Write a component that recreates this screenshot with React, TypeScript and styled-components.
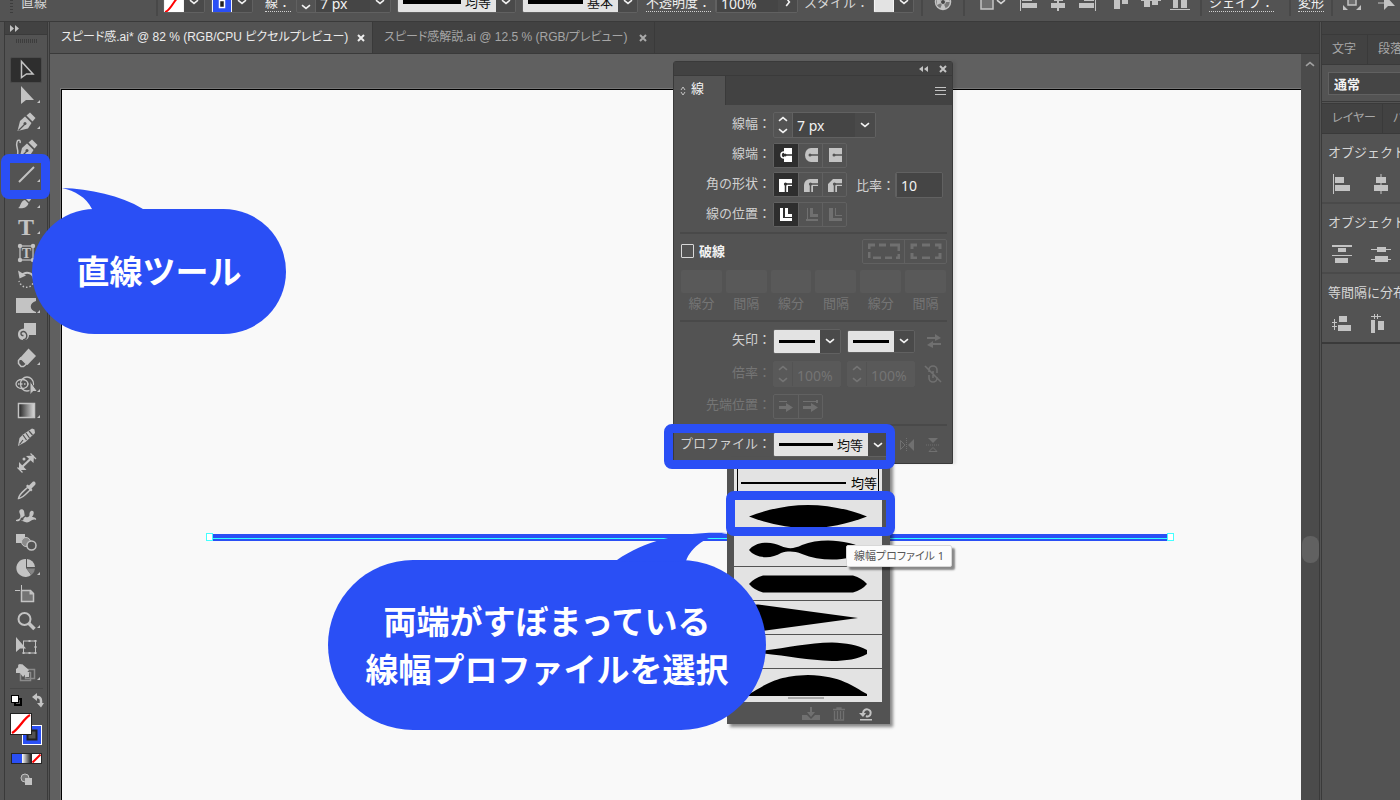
import React from "react";
import styled, { createGlobalStyle, css } from "styled-components";

const c = {
  base: "#535353",
  dark: "#424242",
  field: "#454545",
  line: "#3a3a3a",
  edge: "#616161",
  canvas: "#606060",
  art: "#f9f9f9",
  blue: "#2a4ff5",
  icon: "#c3c3c3",
  off: "#707070",
  paper: "#e3e3e3",
};

const Global = createGlobalStyle`
  *, *::before, *::after { box-sizing: border-box; }
  body { margin: 0; background: ${c.base}; }
  body, button, input, select {
    font-family: "Noto Sans", "Noto Sans CJK JP", sans-serif;
    font-size: 13px;
    line-height: 20px;
    color: #d6d6d6;
  }
  button, input, select { margin: 0; padding: 0; border: 0; border-radius: 0; background: none; }
  svg { display: block; flex: none; }
`;

const App_ = styled.div`
  position: relative;
  display: flex;
  flex-direction: column;
  height: 100vh;
  overflow: hidden;
  background: ${c.base};
`;

/* ---------- control bar ---------- */

const ControlBar = styled.header`
  display: flex;
  flex: none;
  align-items: flex-end;
  height: 22px;
  padding: 0 0 8px 10px;
  overflow: hidden;
  white-space: nowrap;
  border-bottom: 1px solid ${c.line};
`;

const Group = styled.div<{ $gap?: number; $w?: number }>`
  display: flex;
  flex: none;
  align-items: center;
  height: 22px;
  margin-left: ${(p) => p.$gap ?? 0}px;
  ${(p) => p.$w && css`width: ${p.$w}px;`}
`;

const BarLabel = styled.label<{ $dotted?: boolean; $w?: number }>`
  height: 20px;
  ${(p) => p.$w && css`width: ${p.$w}px;`}
  ${(p) => p.$dotted && css`border-bottom: 1px dotted #d0d0d0; color: #f0f0f0;`}
`;

const BarRule = styled.span<{ $gap: number }>`
  flex: none;
  width: 2px;
  height: 22px;
  margin-left: ${(p) => p.$gap}px;
  margin-bottom: -3px;
  background: #484848;
`;

const Grip = styled.span`
  width: 3px;
  height: 22px;
  background: repeating-linear-gradient(#3d3d3d 0 1px, transparent 1px 3px);
`;

const Swatch = styled.button<{ $w?: number }>`
  display: flex;
  align-items: center;
  justify-content: center;
  width: ${(p) => p.$w ?? 21}px;
  height: 22px;
  background: ${c.paper};
  border: 1px solid #f4f4f4;
  overflow: hidden;
`;

/* ---------- shared controls ---------- */

const Text = styled.input<{ $w: number; $off?: boolean }>`
  width: ${(p) => p.$w}px;
  height: 100%;
  min-width: 0;
  padding: 2px 0 0 4px;
  font-size: 14px;
  color: ${(p) => (p.$off ? "#747474" : "#f2f2f2")};
  background: ${(p) => (p.$off ? "transparent" : c.field)};
  border-left: 1px solid ${(p) => (p.$off ? c.base : c.edge)};
`;

const Small = styled.button<{ $w?: number; $off?: boolean }>`
  display: flex;
  flex: none;
  align-items: center;
  justify-content: center;
  width: ${(p) => p.$w ?? 20}px;
  height: 100%;
  color: ${(p) => (p.$off ? "#747474" : "#f2f2f2")};
  background: ${(p) => (p.$off ? "transparent" : "#4a4a4a")};
`;

const Combo = styled.div<{ $h?: number; $off?: boolean }>`
  display: flex;
  flex: none;
  height: ${(p) => p.$h ?? 26}px;
  overflow: hidden;
  border: 1px solid ${(p) => (p.$off ? "#595959" : c.edge)};
  border-radius: 2px;
  background: ${(p) => (p.$off ? "#595959" : "transparent")};
`;

const Preview = styled.button<{ $w: number }>`
  display: flex;
  flex: none;
  align-items: center;
  justify-content: space-between;
  gap: 4px;
  width: ${(p) => p.$w}px;
  height: 100%;
  padding: 0 5px;
  color: #111;
  background: ${c.paper};
`;

const StrokeLine = styled.i<{ $h?: number }>`
  flex: 1;
  height: ${(p) => p.$h ?? 3}px;
  background: #000;
`;

const Chevron = ({ up = false, right = false }: { up?: boolean; right?: boolean }) => (
  <svg width="10" height="6" viewBox="0 0 10 6" fill="none" stroke="currentColor" strokeWidth="1.600"
    transform={up ? "rotate(180)" : right ? "rotate(270)" : undefined}>
    <path d="M1 1.200 5 4.400 9 1.200" />
  </svg>
);

const StepBox = styled.div<{ $off?: boolean }>`
  display: flex;
  flex: none;
  flex-direction: column;
  width: 18px;
  color: ${(p) => (p.$off ? "#747474" : "#f2f2f2")};
  button { display: flex; flex: 1; align-items: center; justify-content: center; color: inherit; }
`;

const Stepper = ({ off }: { off?: boolean }) => (
  <StepBox $off={off}>
    <button aria-label="増やす" disabled={off}><Chevron up /></button>
    <button aria-label="減らす" disabled={off}><Chevron /></button>
  </StepBox>
);

const Ico = ({ w = 20, h = 20, children }: { w?: number; h?: number; children: React.ReactNode }) => (
  <svg width={w} height={h} viewBox={`0 0 ${w} ${h}`} fill={c.icon}>{children}</svg>
);

/* ---------- workspace ---------- */

const Work = styled.div`
  display: flex;
  flex: 1;
  min-height: 0;
`;

const Toolbar = styled.nav`
  display: flex;
  flex: none;
  flex-direction: column;
  align-items: center;
  width: 46px;
  margin-left: 4px;
  border-left: 1px solid ${c.line};
  border-right: 3px double ${c.line};
`;

const ToolHead = styled.div`
  display: flex;
  flex: none;
  align-items: center;
  align-self: stretch;
  height: 13px;
  padding-left: 5px;
  background: ${c.dark};
  border-bottom: 1px solid ${c.line};
`;

const ToolGrip = styled.div`
  flex: none;
  width: 21px;
  height: 4px;
  margin: 4px 0 14px;
  background: repeating-linear-gradient(90deg, #3d3d3d 0 1px, transparent 1px 2px);
`;

const ToolGroup = styled.div`
  display: flex;
  flex: none;
  flex-direction: column;
  margin-bottom: 1px;
`;

const Tool = styled.button<{ $on?: boolean }>`
  display: flex;
  align-items: center;
  justify-content: center;
  width: 32px;
  height: 26px;
  border-radius: 2px;
  ${(p) => p.$on && css`background: #2e2e2e; border: 1px solid #4b4b4b;`}
`;

const ToolRule = styled.hr`
  flex: none;
  width: 33px;
  height: 1px;
  margin: 1px 0 3px;
  border: 0;
  background: #484848;
`;

const PaintArea = styled.div`
  display: flex;
  flex: none;
  flex-direction: column;
  align-items: center;
`;

const Main = styled.main`
  display: flex;
  flex: 1;
  flex-direction: column;
  min-width: 0;
`;

const Tabs = styled.div`
  display: flex;
  flex: none;
  height: 32px;
  background: ${c.dark};
  border-bottom: 1px solid ${c.line};
`;

const Tab = styled.div<{ $on?: boolean }>`
  display: flex;
  align-items: center;
  justify-content: space-between;
  width: ${(p) => (p.$on ? 323 : 282)}px;
  padding: 0 7px 2px 11px;
  white-space: nowrap;
  font-family: "Liberation Sans", "Noto Sans CJK JP", sans-serif;
  font-size: 12px;
  font-feature-settings: "palt";
  color: ${(p) => (p.$on ? "#ececec" : "#a6a6a6")};
  background: ${(p) => (p.$on ? c.base : "transparent")};
  border-right: 1px solid ${c.line};
  button { color: inherit; padding-top: 2px; }
`;

const View = styled.div`
  display: flex;
  flex: 1;
  min-height: 0;
`;

const Canvas = styled.div`
  flex: 1;
  min-width: 0;
  display: flex;
  padding: 35px 0 0 11px;
  background: ${c.canvas};
`;

const Artboard = styled.div`
  flex: 1;
  background: ${c.art};
  border-top: 1px solid #000;
  border-left: 1px solid #000;
  outline: 1px solid #777;
`;

const Scroll = styled.div`
  display: flex;
  flex: none;
  flex-direction: column;
  width: 18px;
  background: #4b4b4b;
  color: #a0a0a0;
`;

const ScrollTop = styled.button`
  display: flex;
  flex: none;
  align-items: center;
  justify-content: center;
  height: 20px;
  color: inherit;
`;

const Space = styled.div<{ $n: number }>`
  flex: ${(p) => p.$n} 1 0;
`;

const Thumb = styled.div`
  flex: none;
  height: 27px;
  margin-left: 1px;
  border-radius: 8px;
  background: #616161;
`;

/* ---------- right dock ---------- */

const Dock = styled.aside`
  flex: none;
  width: 81px;
  overflow: hidden;
  white-space: nowrap;
  border-left: 3px double ${c.line};
`;

const DockHead = styled.div`
  height: 13px;
  background: ${c.dark};
  border-bottom: 1px solid ${c.line};
`;

const DockTabs = styled.div`
  display: flex;
  height: 30px;
  background: ${c.dark};
  border-bottom: 1px solid ${c.line};
`;

const DockTab = styled.button<{ $w: number }>`
  flex: none;
  width: ${(p) => p.$w}px;
  padding-left: 10px;
  padding-bottom: 1px;
  text-align: left;
  font-size: 12px;
  font-feature-settings: "palt";
  color: #a8a8a8;
  border-right: 1px solid ${c.line};
`;

const DockSelect = styled.div`
  height: 39px;
  padding: 7px 0 0 6px;
  border-bottom: 3px double ${c.line};
  select {
    appearance: none;
    width: 120px;
    height: 23px;
    padding-left: 5px;
    font-weight: 700;
    color: #f2f2f2;
    background: ${c.field};
    border: 1px solid ${c.edge};
  }
`;

const DockBlock = styled.section<{ $last?: boolean }>`
  height: 70px;
  padding: 8px 0 0 6px;
  border-bottom: 2px solid ${(p) => (p.$last ? c.line : "#4a4a4a")};
`;

const DockIcons = styled.div`
  display: flex;
  gap: 19px;
  padding: 12px 0 0 4px;
`;

/* ---------- floating panel ---------- */

const Panel = styled.section`
  position: absolute;
  left: 673px;
  top: 61px;
  width: 280px;
  background: ${c.base};
  border: 1px solid ${c.line};
  border-radius: 3px 3px 0 0;
  box-shadow: 3px 0 3px rgba(0, 0, 0, 0.08);
`;

const PanelHead = styled.div`
  display: flex;
  align-items: center;
  justify-content: flex-end;
  gap: 11px;
  height: 14px;
  padding-right: 5px;
  background: ${c.dark};
  border-bottom: 1px solid ${c.line};
`;

const PanelTabs = styled.div`
  display: flex;
  align-items: center;
  justify-content: space-between;
  height: 29px;
  padding-right: 6px;
  background: ${c.dark};
`;

const PanelTab = styled.button`
  display: flex;
  align-items: center;
  gap: 5px;
  width: 52px;
  height: 100%;
  padding: 0 0 6px 6px;
  color: #f4f4f4;
  background: ${c.base};
  border-right: 1px solid ${c.line};
  svg { margin-top: 7px; }
`;

const PanelBody = styled.div`
  padding: 6px 5px 0 6px;
`;

const Row = styled.div<{ $h: number }>`
  display: flex;
  align-items: center;
  height: ${(p) => p.$h}px;
`;

const RowLabel = styled.label<{ $off?: boolean }>`
  flex: none;
  width: 93px;
  padding: 0 2px 4px 0;
  text-align: right;
  white-space: nowrap;
  color: ${(p) => (p.$off ? "#757575" : "#d0d0d0")};
`;

const Rule = styled.hr`
  height: 2px;
  margin: 0;
  border: 0;
  background: #494949;
`;

const Segments = styled.div`
  display: flex;
  height: 25px;
  border: 1px solid ${c.edge};
  border-radius: 2px;
`;

const Segment = styled.button<{ $on?: boolean; $w?: number }>`
  display: flex;
  align-items: center;
  justify-content: center;
  width: ${(p) => p.$w ?? 24}px;
  background: ${(p) => (p.$on ? "#2e2e2e" : "transparent")};
  & + & { border-left: 1px solid ${c.edge}; }
`;

const Miter = styled.label`
  display: flex;
  align-items: center;
  margin-left: 9px;
  white-space: nowrap;
  color: #d0d0d0;
`;

const Check = styled.label`
  display: flex;
  flex: 1;
  align-items: center;
  gap: 5px;
  font-weight: 700;
  color: #f2f2f2;
  input {
    appearance: none;
    width: 13px;
    height: 14px;
    margin-left: 1px;
    border: 1px solid #d8d8d8;
    border-radius: 1px;
  }
`;

const Dashes = styled.div`
  display: grid;
  grid-template-columns: repeat(6, 1fr);
  gap: 4px;
  height: 52px;
  padding: 2px 1px 0;
  label { text-align: center; color: #757575; }
  input { display: block; width: 100%; height: 23px; background: #595959; border-radius: 2px; }
`;

const Spacer = styled.span<{ $w: number }>`
  flex: none;
  width: ${(p) => p.$w}px;
`;

/* ---------- profile menu ---------- */

const Menu = styled.div`
  position: absolute;
  left: 727px;
  top: 457px;
  width: 163px;
  padding: 8px 8px 0 7px;
  background: ${c.base};
  box-shadow: 3px 3px 3px rgba(0, 0, 0, 0.45);
`;

const MenuItem = styled.button<{ $first?: boolean }>`
  display: flex;
  align-items: center;
  width: 100%;
  height: 34px;
  background: ${c.paper};
  border-bottom: 1px solid ${c.base};
  ${(p) =>
    p.$first &&
    css`
      gap: 5px;
      padding: 3px 5px 0 7px;
      color: #000;
      box-shadow: inset 3px 0 ${c.paper}, inset 4px 0 #000, inset -3px 0 ${c.paper}, inset -4px 0 #000;
    `}
`;

const MenuFoot = styled.div`
  display: flex;
  align-items: center;
  justify-content: flex-end;
  gap: 10px;
  height: 21px;
  padding-right: 8px;
`;

const Tip = styled.div`
  position: absolute;
  left: 846px;
  top: 545px;
  padding: 0 7px;
  white-space: nowrap;
  font-size: 11px;
  font-feature-settings: "palt";
  color: #575757;
  background: #fcfcfc;
  border: 1px solid #d8d8d8;
  border-radius: 2px;
  box-shadow: 3px 3px 2px rgba(0, 0, 0, 0.45);
`;

/* ---------- annotations ---------- */

const Mark = styled.div<{ $x: number; $y: number; $w: number; $h: number }>`
  position: absolute;
  left: ${(p) => p.$x}px;
  top: ${(p) => p.$y}px;
  width: ${(p) => p.$w}px;
  height: ${(p) => p.$h}px;
  border: 9px solid ${c.blue};
  border-radius: 8px;
  pointer-events: none;
`;

const Bubble = styled.div<{ $x: number; $y: number; $w: number; $h: number }>`
  position: absolute;
  left: ${(p) => p.$x}px;
  top: ${(p) => p.$y}px;
  display: flex;
  align-items: center;
  justify-content: center;
  width: ${(p) => p.$w}px;
  height: ${(p) => p.$h}px;
  padding-bottom: 3px;
  border-radius: 85px;
  background: ${c.blue};
  color: #fff;
  font-family: "Noto Sans CJK JP", sans-serif;
  font-size: 33px;
  font-weight: 700;
  line-height: 48px;
  text-align: center;
  white-space: nowrap;
`;

const Tail = styled.svg<{ $x: number; $y: number }>`
  position: absolute;
  left: ${(p) => p.$x}px;
  top: ${(p) => p.$y}px;
`;

const DrawnLine = styled.svg`
  position: absolute;
  left: 206px;
  top: 533px;
`;

/* ---------- tool drawings, each on a 28 x 26 field ---------- */

const bg = c.base;
const penNib = (
  <>
    <path d="M5.500 22 8 12 13 7.500 19.500 14 16 19.500Z" />
    <path d="M14.500 6.500 18 3.500 23.500 9 20.500 12.500Z" />
    <path d="M6.500 21.500 13 15" stroke={bg} strokeWidth="1.200" />
    <circle cx="13" cy="14.500" r="1.500" fill={bg} />
  </>
);

type ToolDef = { name: string; more?: boolean; art: React.ReactNode };

const tools: ToolDef[] = [
  { name: "選択", art: <path d="M9.500 4.500V20.500L14.500 17H21Z" fill="none" stroke={c.icon} strokeWidth="1.500" /> },
  { name: "ダイレクト選択", more: true, art: <path d="M9 3V21L14 17H22Z" /> },
  { name: "ペン", more: true, art: penNib },
  {
    name: "曲線",
    art: (
      <>
        <g transform="translate(2 1)">{penNib}</g>
        <path d="M4 21C9 18 3 12 5 7 6 4 9 5 8 8" fill="none" stroke={c.icon} strokeWidth="1.500" />
      </>
    ),
  },
  { name: "直線", more: true, art: <path d="M7 20 22 5" stroke={c.icon} strokeWidth="2" /> },
  {
    name: "ブラシ",
    more: true,
    art: (
      <>
        <path d="M14 11 22 3 24 5 17 14Z" />
        <path d="M6 20C9 19 8 13 13 12L16.500 15.500C15 20 10 21 6 20Z" />
      </>
    ),
  },
  {
    name: "文字",
    more: true,
    art: <text x="14" y="21" textAnchor="middle" fontFamily="Liberation Serif, serif" fontWeight="700" fontSize="24">T</text>,
  },
  {
    name: "タッチ文字",
    art: (
      <>
        <rect x="8" y="6" width="13" height="14" fill="none" stroke={c.icon} strokeWidth="1.200" />
        <circle cx="8" cy="6" r="2.200" /><circle cx="21" cy="6" r="2.200" />
        <circle cx="8" cy="20" r="2.200" /><circle cx="21" cy="20" r="2.200" />
        <text x="14.500" y="18" textAnchor="middle" fontFamily="Liberation Serif, serif" fontWeight="700" fontSize="14">T</text>
      </>
    ),
  },
  {
    name: "回転",
    more: true,
    art: (
      <>
        <path d="M6 3.500 7.500 11.500 14 8.500Z" />
        <path d="M9 9C13 4 21 5 22 12" fill="none" stroke={c.icon} strokeWidth="2" />
        <path d="M22 13C21 22 10 23 7 14" fill="none" stroke={c.icon} strokeWidth="1.500" strokeDasharray="1.500 2" />
      </>
    ),
  },
  { name: "線幅", more: true, art: <path d="M4 5H24V8C17 10 17 17 24 19V20H4Z" /> },
  {
    name: "ワープ",
    art: (
      <>
        <path d="M12 4H24V16H17C17 23 6 23 6 15.500 6 11 9 10 12 9.500Z" />
        <path d="M11 21C17 20 15 12 11 12.500 8 13 8.500 17 11.500 16.500" fill="none" stroke={bg} strokeWidth="1.400" />
      </>
    ),
  },
  {
    name: "消しゴム",
    more: true,
    art: (
      <>
        <path d="M8 13 16.500 3.500 24 11 15.500 20Z" />
        <path d="M8.500 13 14.500 19 11.500 21.500H9L6.500 18.500V15.500Z" fill={bg} stroke={c.icon} strokeWidth="1.500" />
      </>
    ),
  },
  {
    name: "シェイプ形成",
    more: true,
    art: (
      <>
        <ellipse cx="10" cy="12" rx="6" ry="4.500" fill="none" stroke={c.icon} strokeWidth="1.300" />
        <ellipse cx="15" cy="12" rx="6.500" ry="7" fill="none" stroke={c.icon} strokeWidth="1.300" />
        <path d="M6 12H18" stroke={c.icon} strokeWidth="1.500" strokeDasharray="1.500 1.500" />
        <path d="M18 9V23L21 19.500H25.500Z" stroke={bg} />
      </>
    ),
  },
  {
    name: "グラデーション",
    more: true,
    art: (
      <>
        <defs><linearGradient id="g1"><stop stopColor="#222" /><stop offset="1" stopColor="#ddd" /></linearGradient></defs>
        <rect x="6.500" y="5.500" width="16" height="14" fill="url(#g1)" stroke={c.icon} strokeWidth="1.500" />
      </>
    ),
  },
  {
    name: "鉛筆",
    art: (
      <>
        <path d="M6 22 7.500 14 11 10.500 20 4.500 22.500 5.500 23 9 13.500 18Z" />
        <path d="M7.500 20.500 11 16M11 11 14.500 16M14 9 17.500 14M17 7 20.500 11" stroke={bg} strokeWidth="1.200" />
      </>
    ),
  },
  {
    name: "寸法",
    art: (
      <>
        <path d="M8.500 18.500 20.500 7" stroke={c.icon} strokeWidth="2.200" />
        <path d="M7 12V20H14.500ZM14 6 22 5.500 21.500 13Z" />
        <path d="M5.500 17.500 10.500 22.500M18.500 3.500 24 9" stroke={c.icon} strokeWidth="1.300" />
        <circle cx="12" cy="9" r="1.500" />
      </>
    ),
  },
  {
    name: "スポイト",
    art: (
      <>
        <path d="M6.500 21.500C7 17 12 14 16 10L18.500 12.500C14 17 11 21 6.500 21.500Z" fill="none" stroke={c.icon} strokeWidth="1.500" />
        <path d="M14 9 15.500 7.500 17 8.500 21 4.500C24 4 24 7 23 8L19.500 11.500 20.500 13 19 14.500Z" />
      </>
    ),
  },
  {
    name: "パペット",
    art: (
      <>
        <path d="M4 17C9 16 9 13 7.500 10 6 6 11 5 12 8 13 12 12 15 16 14 19 13 16 10 19 8 23 7 22 12 20 14 22 14 25 15 24 17 19 15 18 21 13 19 9 17 8 19 4 18Z" />
        <path d="M5 21 13 13" stroke={bg} strokeWidth="1.200" />
        <circle cx="10" cy="16" r="1.500" fill={bg} />
      </>
    ),
  },
  {
    name: "ブレンド",
    art: (
      <>
        <rect x="4" y="5" width="9" height="9" />
        <circle cx="14" cy="13" r="4.500" fill="#8b8b8b" stroke={c.icon} />
        <circle cx="19.500" cy="16.500" r="4.500" fill={bg} stroke={c.icon} strokeWidth="1.500" />
      </>
    ),
  },
  {
    name: "グラフ",
    more: true,
    art: (
      <>
        <path d="M14 13V4A9 9 0 1 0 19 20Z" />
        <path d="M15 12V4A8.500 8.500 0 0 1 23 12Z" />
        <path d="M14.500 13.500H23A9 9 0 0 1 19.500 20Z" fill="#858585" />
      </>
    ),
  },
  {
    name: "アートボード",
    art: (
      <>
        <path d="M3 8.500H8M9.500 3V8" stroke={c.icon} />
        <path d="M9.500 8.500H18.500L21.500 11.500V19.500H9.500Z" fill="#757575" stroke={c.icon} strokeWidth="1.500" />
        <path d="M17.500 8 22 12.500H17.500Z" />
      </>
    ),
  },
  {
    name: "ズーム",
    more: true,
    art: (
      <>
        <circle cx="12.500" cy="11" r="6" fill="none" stroke={c.icon} strokeWidth="2" />
        <path d="M16.500 15 22.500 21" stroke={c.icon} strokeWidth="3.500" />
      </>
    ),
  },
  {
    name: "自由変形",
    art: (
      <>
        <rect x="11.500" y="7" width="12" height="12" fill="none" stroke={c.icon} />
        <path d="M4 3V18L8 14.500H14Z" />
        <path d="M16.500 6h2v2h-2zM22.500 6h2v2h-2zM22.500 12h2v2h-2zM10.500 18h2v2h-2zM16.500 18h2v2h-2zM22.500 18h2v2h-2z" />
      </>
    ),
  },
  {
    name: "ライブペイント",
    more: true,
    art: (
      <>
        <rect x="13.500" y="9.500" width="9" height="9" fill="none" stroke="#8b8b8b" strokeWidth="1.500" />
        <rect x="8.500" y="12.500" width="10" height="8" fill="none" stroke="#8b8b8b" strokeWidth="1.500" />
        <path d="M4 13V9L10 4 17 10 11 17 8 13Z" />
        <rect x="13" y="12" width="4" height="5" />
        <circle cx="8" cy="6" r="2" />
      </>
    ),
  },
];

const toolGroups = [0, 4, 8, 12, 16, 20].map((i) => tools.slice(i, i + 4));

const ToolIcon = ({ tool }: { tool: ToolDef }) => (
  <svg width="28" height="26" viewBox="0 0 28 26" fill={c.icon}>
    {tool.art}
    {tool.more && <path d="M28 17V20H25Z" />}
  </svg>
);

const alignIcons = [
  "M1 0h1v19h-1zM3 2h10v7h-10zM3 11h15v5h-15z",
  "M9 0h2v19h-2zM6 2h9v7h-9zM3 11h14v5h-14z",
  "M18 0h1v19h-1zM7 2h10v7h-10zM2 11h15v5h-15z",
  "M2 0h6v17h-6zM10 0h6v12h-6z",
  "M0 7h20v2h-20zM3 0h6v15h-6zM11 2h6v11h-6z",
  "M0 17h20v1h-20zM3 0h5v16h-5zM11 5h6v11h-6z",
];

const profiles: React.ReactNode[] = [
  <path d="M15 17.500C55 2 93 2 133 17.500 93 33 55 33 15 17.500Z" />,
  <path d="M15 17C22 8 38 8 47 13 54 16 60 16 68 12 88 4 116 7 133 17 116 29 88 29 68 21 60 18 54 18 47 20 38 26 22 26 15 17Z" />,
  <path d="M15 17Q20 11 29 8.500H119Q128 11 133 17 128 23 119 25.500H29Q20 23 15 17Z" />,
  <path d="M15 4 24 3.500 124 17 24 30.500H15Z" />,
  <path d="M15 17C50 14 70 8 98 7.500 112 8 124 10 133 15V19C124 24 112 26 98 26 70 25 50 20 15 17Z" />,
  <><path d="M15 25C30 17 40 7 74 6 108 7 118 17 133 25V27H15Z" /><path d="M54 28h36v2h-36z" fill="#aaa" /></>,
];

const Cap = ({ kind }: { kind: number }) => (
  <Ico w={16} h={16}>
    {kind === 0 && <><circle cx="6" cy="8" r="3" fill="none" stroke="#fff" strokeWidth="1.500" /><rect x="6" y="1" width="8" height="14" fill="#fff" /></>}
    {kind === 1 && <path d="M8 1H15V15H8A6 7 0 0 1 8 1Z" />}
    {kind === 2 && <path d="M2 1H15V15H2Z" />}
    <path d="M7 8H15" stroke={kind ? bg : "#2e2e2e"} strokeWidth="1.500" />
    <circle cx="7" cy="8" r="1.500" fill={kind ? bg : "#2e2e2e"} />
  </Ico>
);

const Join = ({ kind }: { kind: number }) => (
  <Ico w={16} h={16}>
    <path
      d={["M1 2H14V9H10V15H1Z", "M1 15V8A6 6 0 0 1 7 2H15V9H10V15Z", "M1 15V7L6 2H15V9H10V15Z"][kind]}
      fill={kind ? c.icon : "#fff"}
    />
    <path d="M15 7H7.500V15" fill="none" stroke={kind ? bg : "#2e2e2e"} strokeWidth="1.500" />
    <circle cx="7.500" cy="7" r="1.600" fill={kind ? bg : "#2e2e2e"} />
  </Ico>
);

const Side = ({ kind }: { kind: number }) => (
  <Ico w={16} h={16}>
    <path d={["M2 1H5V11H14V14H2Z", "M4 1H5V12H15V14H3V12H4Z", "M2 1H6V11H15V14H2Z"][kind]} fill={kind ? c.off : "#fff"} />
    <path d={["M7 1H10V7H14V10H7Z", "M7 1H10V7H15V10H7Z", "M8 1H9V8H15V9H8Z"][kind]} fill={kind ? c.off : "#fff"} />
  </Ico>
);

const NoneSlash = ({ w = 20, h = 20 }: { w?: number; h?: number }) => (
  <svg width={w} height={h} viewBox="0 0 20 20" preserveAspectRatio="none">
    <rect width="20" height="20" fill="#fff" />
    <path d="M1 19C8 17 10 4 19 1" fill="none" stroke="#f00" strokeWidth="2" />
  </svg>
);

const dashNames = ["線分", "間隔", "線分", "間隔", "線分", "間隔"];

export default function App() {
  return (
    <App_>
      <Global />

      <ControlBar>
        <Grip />
        <Group $gap={8} $w={135}>直線</Group>
        <BarRule $gap={0} />
        <Group $gap={5}>
          <Combo $h={22}>
            <Swatch $w={20} aria-label="塗り"><NoneSlash /></Swatch>
            <Small aria-label="塗りを選ぶ"><Chevron /></Small>
          </Combo>
        </Group>
        <Group $gap={6}>
          <Combo $h={22}>
            <Swatch $w={20} aria-label="線の色">
              <svg width="20" height="22" viewBox="0 0 20 22">
                <rect width="20" height="22" fill={c.blue} />
                <rect x="7.500" y="8.500" width="5" height="7" fill="#222" stroke="#fff" strokeWidth="1.500" />
              </svg>
            </Swatch>
            <Small aria-label="線の色を選ぶ"><Chevron /></Small>
          </Combo>
        </Group>
        <Group $gap={12}><BarLabel htmlFor="bar-width" $dotted>線：</BarLabel></Group>
        <Group $gap={5}>
          <Combo $h={22}>
            <Stepper />
            <Text id="bar-width" $w={55} defaultValue="7 px" />
            <Small aria-label="線幅を選ぶ"><Chevron /></Small>
          </Combo>
        </Group>
        <Group $gap={6}>
          <Combo $h={22}>
            <Preview $w={98}><StrokeLine $h={4} />均等</Preview>
            <Small $w={19} aria-label="プロファイルを選ぶ"><Chevron /></Small>
          </Combo>
        </Group>
        <Group $gap={6}>
          <Combo $h={22}>
            <Preview $w={95}><StrokeLine $h={4} />基本</Preview>
            <Small $w={19} aria-label="ブラシを選ぶ"><Chevron /></Small>
          </Combo>
        </Group>
        <Group $gap={8}><BarLabel htmlFor="bar-opacity" $dotted>不透明度：</BarLabel></Group>
        <Group $gap={4}>
          <Combo $h={22}>
            <Text id="bar-opacity" $w={62} defaultValue="100%" />
            <Small $w={19} aria-label="不透明度を選ぶ"><Chevron right /></Small>
          </Combo>
        </Group>
        <Group $gap={6}><BarLabel>スタイル：</BarLabel></Group>
        <Group $gap={4}>
          <Combo $h={22}>
            <Swatch $w={20} aria-label="スタイル" />
            <Small $w={19} aria-label="スタイルを選ぶ"><Chevron /></Small>
          </Combo>
        </Group>
        <BarRule $gap={7} />
        <Group $gap={10}>
          <Ico>
            <circle cx="10" cy="10" r="7.500" fill="#777" stroke={c.icon} strokeWidth="1.500" />
            <path d="M10 10 4 6V13ZM10 10 14 4 17 10ZM10 10 7 17H13Z" />
            <circle cx="10" cy="10" r="2.500" fill="#444" stroke={c.icon} />
          </Ico>
        </Group>
        <BarRule $gap={10} />
        <Group $gap={15}>
          <Ico w={14} h={22}><path d="M1 0V18H13V6L9 1Z" fill="#6f6f6f" stroke={c.icon} strokeWidth="1.500" /></Ico>
          <Spacer $w={2} /><Chevron />
        </Group>
        {alignIcons.map((d, i) => (
          <Group key={d} $gap={i === 0 ? 13 : i === 3 ? 15 : 9}><Ico><path d={d} /></Ico></Group>
        ))}
        <BarRule $gap={10} />
        <Group $gap={7} $w={66}><BarLabel $dotted>シェイプ：</BarLabel></Group>
        <BarRule $gap={14} />
        <Group $gap={7}><BarLabel $dotted>変形</BarLabel></Group>
        <BarRule $gap={7} />
        <Group $gap={9}>
          <Ico><path d="M6 0V13H14V0" fill="#6f6f6f" stroke={c.icon} strokeWidth="1.500" /><path d="M1 18V13L6 18ZM19 18V13L14 18Z" /></Ico>
        </Group>
        <Group $gap={14}><Ico><path d="M2 11H10V3" fill="none" stroke={c.icon} /><path d="M8 2V18L12 14H19Z" /></Ico></Group>
      </ControlBar>

      <Work>
        <Toolbar aria-label="ツール">
          <ToolHead>
            <Ico w={9} h={7}><path d="M0 0V7L4 3.500ZM5 0V7L9 3.500Z" /></Ico>
          </ToolHead>
          <ToolGrip />
          {toolGroups.map((g, gi) => (
            <ToolGroup key={gi}>
              {g.map((t, i) => (
                <Tool key={t.name} aria-label={t.name} $on={gi === 0 && i === 0}><ToolIcon tool={t} /></Tool>
              ))}
            </ToolGroup>
          ))}
          <ToolRule />
          <PaintArea>
            <svg width="36" height="100" viewBox="0 0 36 100">
              <rect x="7" y="7" width="6" height="6" fill="none" stroke="#000" strokeWidth="2" />
              <rect x="3.500" y="3.500" width="7" height="7" fill="#fff" stroke="#000" />
              <path d="M28 5H29Q33 5 33 9V12" fill="none" stroke={c.icon} strokeWidth="2.500" />
              <path d="M24 5 29 1V9ZM29 11H36L33 15.500Z" fill={c.icon} />
              <rect x="14.500" y="33.500" width="19" height="19" fill={c.blue} stroke="#fff" />
              <rect x="19.500" y="38.500" width="9" height="9" fill={bg} stroke="#222" strokeWidth="2" />
              <rect x="2.500" y="21.500" width="21" height="21" fill="#fff" stroke="#222" />
              <path d="M4 41C11 37 16 26 22 23" fill="none" stroke="#f00" strokeWidth="2.200" />
              <rect x="3" y="61" width="31" height="11" fill="#262626" />
              <defs><linearGradient id="g2"><stop stopColor="#fff" /><stop offset="1" stopColor="#222" /></linearGradient></defs>
              <rect x="4" y="62" width="10" height="9" fill={c.blue} />
              <rect x="14" y="62" width="9" height="9" fill="url(#g2)" />
              <rect x="24" y="62" width="9" height="9" fill="#fff" />
              <path d="M24.500 70.500 32.500 62.500" stroke="#f00" strokeWidth="2" />
              <circle cx="17" cy="86" r="4" fill="#777" stroke={c.icon} />
              <rect x="17" y="86" width="7" height="7" fill={c.icon} />
            </svg>
          </PaintArea>
        </Toolbar>

        <Main>
          <Tabs>
            <Tab $on>スピード感.ai* @ 82 % (RGB/CPU ピクセルプレビュー)<button aria-label="閉じる"><Ico w={8} h={8}><path d="M1 1 7 7M7 1 1 7" stroke="#eee" strokeWidth="2" /></Ico></button></Tab>
            <Tab>スピード感解説.ai @ 12.5 % (RGB/プレビュー)<button aria-label="閉じる"><Ico w={8} h={8}><path d="M1 1 7 7M7 1 1 7" stroke="#aaa" strokeWidth="2" /></Ico></button></Tab>
          </Tabs>
          <View>
            <Canvas><Artboard /></Canvas>
            <Scroll>
              <ScrollTop aria-label="上へ"><Chevron up /></ScrollTop>
              <Space $n={462} />
              <Thumb />
              <Space $n={237} />
            </Scroll>
          </View>
        </Main>

        <Dock>
          <DockHead />
          <DockTabs><DockTab $w={46}>文字</DockTab><DockTab $w={60}>段落</DockTab></DockTabs>
          <DockSelect><select aria-label="描画モード"><option>通常</option></select></DockSelect>
          <DockTabs><DockTab $w={61}>レイヤー</DockTab><DockTab $w={60}>パス</DockTab></DockTabs>
          <DockBlock>
            オブジェクトの整列
            <DockIcons>
              <Ico><path d="M1 0h1v20h-1zM3 3h9v6h-9zM3 11h15v6h-15z" /></Ico>
              <Ico><path d="M9.500 0h1v20h-1zM5 3h10v6h-10zM3 11h14v6h-14z" /></Ico>
            </DockIcons>
          </DockBlock>
          <DockBlock>
            オブジェクトの分布
            <DockIcons>
              <Ico><path d="M0 1h20v2h-20zM6 4h8v4h-8zM0 11h20v1h-20zM3 14h13v5h-13z" /></Ico>
              <Ico><path d="M0 5h20v1h-20zM6 3h9v5h-9zM0 15h20v1h-20zM4 12h13v6h-13z" /></Ico>
            </DockIcons>
          </DockBlock>
          <DockBlock $last>
            等間隔に分布
            <DockIcons>
              <Ico><path d="M7 2h8v6h-8zM6 11h13v6h-13zM2 5h1v11h-1zM0 8h5v1h-5zM0 12h5v1h-5z" /></Ico>
              <Ico><path d="M-3 6h6v13h-6zM6 7h6v9h-6zM-1 2h10v1h-10zM2 0h1v5h-1zM5 0h1v5h-1z" transform="translate(1)" /></Ico>
            </DockIcons>
          </DockBlock>
        </Dock>
      </Work>

      <DrawnLine width="969" height="10" viewBox="0 0 969 10">
        <rect x="7" y="1" width="954" height="7" fill={c.blue} />
        <rect x="7" y="5" width="954" height="1" fill="#3ff" />
        <rect x="0.500" y="0.500" width="6" height="7" fill="#fff" stroke="#4ff" />
        <rect x="961.500" y="0.500" width="6" height="7" fill="#fff" stroke="#4ff" />
      </DrawnLine>

      <Panel aria-label="線">
        <PanelHead>
          <Ico w={9} h={6}><path d="M4 0V6L0 3ZM9 0V6L5 3Z" /></Ico>
          <Ico w={8} h={8}><path d="M1 1 7 7M7 1 1 7" stroke={c.icon} strokeWidth="2" /></Ico>
        </PanelHead>
        <PanelTabs>
          <PanelTab>
            <Ico w={6} h={10}><path d="M1 4 3 1 5 4M1 6 3 9 5 6" fill="none" stroke={c.icon} /></Ico>線
          </PanelTab>
          <Ico w={11} h={8}><path d="M0 0h11v1h-11zM0 3h11v1h-11zM0 7h11v1h-11z" /></Ico>
        </PanelTabs>
        <PanelBody>
          <Row $h={27}>
            <RowLabel htmlFor="w">線幅：</RowLabel>
            <Combo>
              <Stepper />
              <Text id="w" $w={63} defaultValue="7 px" />
              <Small aria-label="線幅の一覧"><Chevron /></Small>
            </Combo>
          </Row>
          <Row $h={34}>
            <RowLabel as="span">線端：</RowLabel>
            <Segments>{[0, 1, 2].map((k) => <Segment key={k} $on={k === 0} aria-label="線端"><Cap kind={k} /></Segment>)}</Segments>
          </Row>
          <Row $h={25}>
            <RowLabel as="span">角の形状：</RowLabel>
            <Segments>{[0, 1, 2].map((k) => <Segment key={k} $on={k === 0} aria-label="角の形状"><Join kind={k} /></Segment>)}</Segments>
            <Miter>比率：<Combo><Text $w={46} defaultValue="10" /></Combo></Miter>
          </Row>
          <Row $h={35}>
            <RowLabel as="span">線の位置：</RowLabel>
            <Segments>{[0, 1, 2].map((k) => <Segment key={k} $on={k === 0} aria-label="線の位置"><Side kind={k} /></Segment>)}</Segments>
          </Row>
          <Rule />
          <Row $h={34}>
            <Check><input type="checkbox" />破線</Check>
            <Segments>
              <Segment $w={41} aria-label="正確な破線">
                <Ico w={32} h={16}><path d="M1 15V9M1 6V2H7M11 2H18M22 2H31V8M31 11V15H28M24 15H17M13 15H5" fill="none" stroke={c.off} strokeWidth="3" /></Ico>
              </Segment>
              <Segment $w={42} aria-label="破線を揃える">
                <Ico w={32} h={16}><path d="M2 6V2H7M12 2H20M25 2H30V6M30 10V15H25M20 15H12M7 15H2V10" fill="none" stroke={c.off} strokeWidth="3" /></Ico>
              </Segment>
            </Segments>
          </Row>
          <Dashes>
            {dashNames.map((n, i) => <label key={i}><input disabled />{n}</label>)}
          </Dashes>
          <Rule />
          <Row $h={38}>
            <RowLabel as="span">矢印：</RowLabel>
            <Combo $h={25}>
              <Preview $w={46} aria-label="始点"><StrokeLine /></Preview>
              <Small aria-label="始点の一覧"><Chevron /></Small>
            </Combo>
            <Spacer $w={6} />
            <Combo $h={23}>
              <Preview $w={46} aria-label="終点"><StrokeLine /></Preview>
              <Small aria-label="終点の一覧"><Chevron /></Small>
            </Combo>
            <Spacer $w={11} />
            <Ico w={16} h={14}><path d="M1 3H9V0L15 4 9 7V5H1ZM15 9H7V7L1 11 7 14V11H15Z" fill={c.off} /></Ico>
          </Row>
          <Row $h={28}>
            <RowLabel $off htmlFor="s1">倍率：</RowLabel>
            <Combo $off><Stepper off /><Text id="s1" $off disabled $w={48} defaultValue="100%" /></Combo>
            <Spacer $w={6} />
            <Combo $off><Stepper off /><Text aria-label="終点の倍率" $off disabled $w={48} defaultValue="100%" /></Combo>
            <Spacer $w={9} />
            <Ico w={18} h={18}>
              <path d="M5 7V5A4 4 0 0 1 13 5V8M5 10V13A4 4 0 0 0 13 13V12M9 6V13M1 1 17 17" fill="none" stroke={c.off} strokeWidth="1.600" />
            </Ico>
          </Row>
          <Row $h={36}>
            <RowLabel $off as="span">先端位置：</RowLabel>
            <Segments>
              <Segment aria-label="先端を延長"><Ico w={14} h={14}><path d="M0 2h8v1h-8zM0 7H7V4L14 8.500 7 13V10H0Z" fill={c.off} /></Ico></Segment>
              <Segment aria-label="先端を合わせる"><Ico w={16} h={14}><path d="M0 2h14v1h-14zM13 1h2v3h-2zM0 7H8V4L15 8.500 8 13V10H0Z" fill={c.off} /></Ico></Segment>
            </Segments>
          </Row>
          <Rule />
          <Row $h={37}>
            <RowLabel as="span">プロファイル：</RowLabel>
            <Combo $h={25}>
              <Preview $w={94}><StrokeLine />均等</Preview>
              <Small aria-label="プロファイルの一覧"><Chevron /></Small>
            </Combo>
            <Spacer $w={10} />
            <Ico w={16} h={14}><path d="M1.500 2.500V11.500L6 7Z" fill="none" stroke={c.off} /><path d="M15 1V13L9 7Z" fill={c.off} /><path d="M7.500 0V14" stroke={c.off} strokeDasharray="1 1" /></Ico>
            <Spacer $w={11} />
            <Ico w={14} h={14}><path d="M2 0H12L7 5Z" fill={c.off} /><path d="M3 13.500H11L7 9.500Z" fill="none" stroke={c.off} /><path d="M0 7H14" stroke={c.off} strokeDasharray="1 1" /></Ico>
          </Row>
        </PanelBody>
      </Panel>

      <Menu>
        <MenuItem $first><StrokeLine $h={2} />均等</MenuItem>
        {profiles.map((p, i) => (
          <MenuItem key={i} aria-label={`線幅プロファイル ${i + 1}`}>
            <svg width="148" height="33" viewBox="0 0 148 33">{p}</svg>
          </MenuItem>
        ))}
        <MenuFoot>
          <Ico w={18} h={14}><path d="M0 8H5L9 12 13 8H18V13H0ZM8 0H10V5H13L9 10 5 5H8Z" fill={c.off} /></Ico>
          <Ico w={18} h={14}><path d="M3 2.500H15M7 2V1H11V2M4.500 4V13H13.500V4M7.500 4V12M10.500 4V12" fill="none" stroke={c.off} strokeWidth="1.300" /></Ico>
          <Ico w={16} h={14}><path d="M5 6C6 0 14 2 12.500 7 12 9 10 10 8 9" fill="none" stroke={c.icon} strokeWidth="2" /><path d="M1 6H8L5 10ZM2 12h12v1.500h-12z" /></Ico>
        </MenuFoot>
      </Menu>

      <Bubble $x={328} $y={560} $w={438} $h={170}>
        <Tail $x={289} $y={-29} width="112" height="31" viewBox="0 0 112 31">
          <path d="M0 29C30 8 70 0 111 2 90 4 74 16 69 30L0 31Z" fill={c.blue} />
        </Tail>
        両端がすぼまっている<br />線幅プロファイルを選択
      </Bubble>
      <Bubble $x={32} $y={209} $w={254} $h={125}>
        <Tail $x={30} $y={-21} width="82" height="23" viewBox="0 0 82 23">
          <path d="M0 0C28 1 58 7 81 21V23H30V21C24 9 13 3 0 0Z" fill={c.blue} />
        </Tail>
        直線ツール
      </Bubble>

      <Mark $x={1} $y={154} $w={49} $h={45} />
      <Mark $x={664} $y={424} $w={231} $h={45} />
      <Mark $x={726} $y={491} $w={169} $h={45} />
      <Tip role="tooltip">線幅プロファイル 1</Tip>
    </App_>
  );
}
